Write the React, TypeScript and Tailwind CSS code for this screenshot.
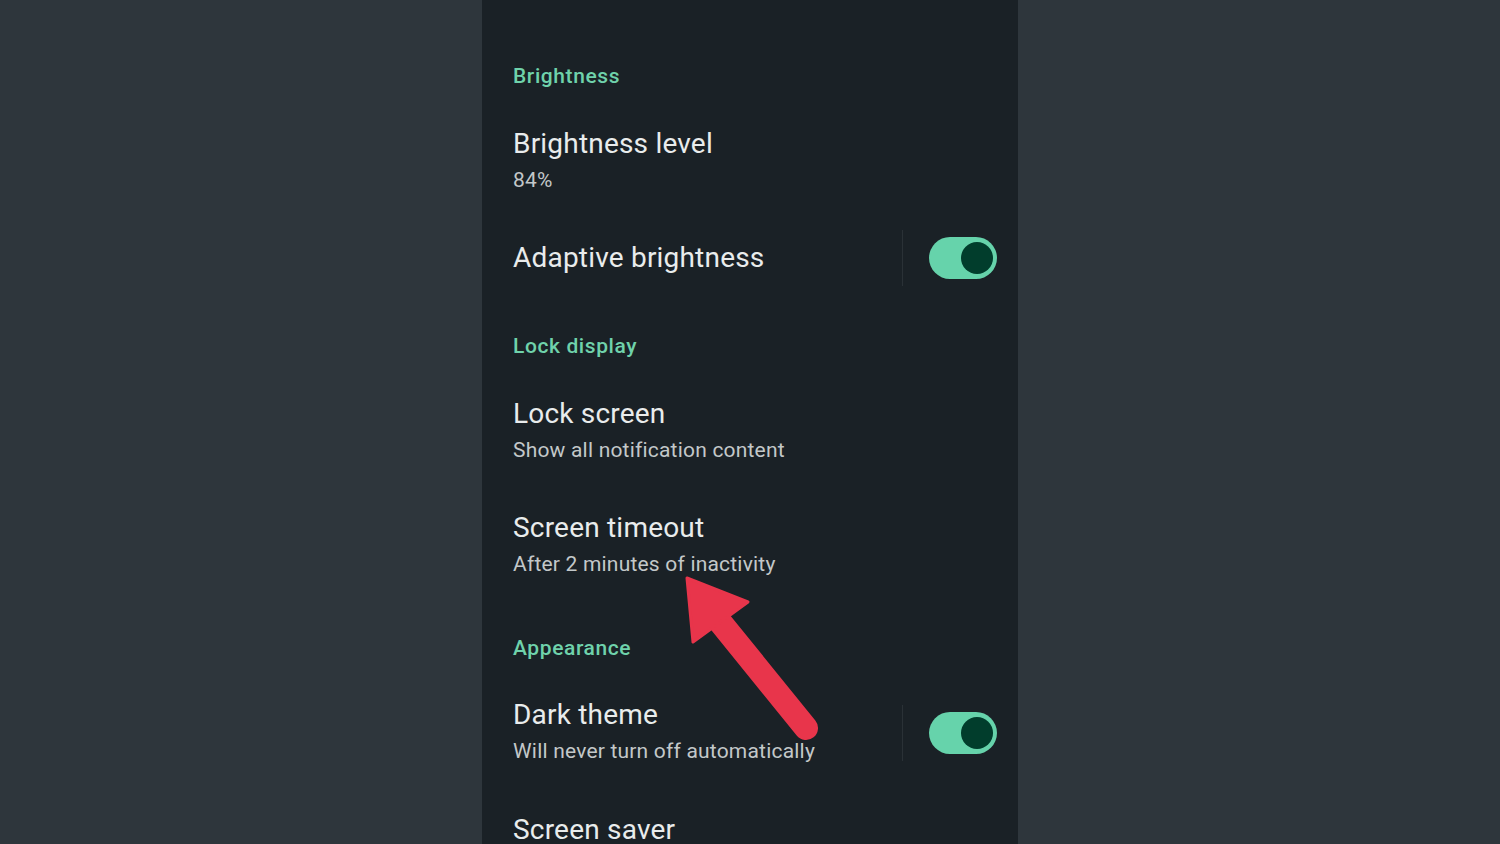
import React from "react";

type Row =
  | { kind: "header"; text: string; h: number }
  | { kind: "item"; title: string; sub?: string; toggle?: boolean; h: number };

const rows: Row[] = [
  { kind: "header", text: "Brightness", h: 86 },
  { kind: "item", title: "Brightness level", sub: "84%", h: 86 },
  { kind: "item", title: "Adaptive brightness", toggle: true, h: 106 },
  { kind: "header", text: "Lock display", h: 70 },
  { kind: "item", title: "Lock screen", sub: "Show all notification content", h: 102 },
  { kind: "item", title: "Screen timeout", sub: "After 2 minutes of inactivity", h: 126 },
  { kind: "header", text: "Appearance", h: 78 },
  { kind: "item", title: "Dark theme", sub: "Will never turn off automatically", toggle: true, h: 92 },
  { kind: "item", title: "Screen saver", h: 102 },
];

function Toggle() {
  return (
    <div className="flex items-center h-full">
      <div className="w-px h-[56px] bg-[#2a3136]" />
      <div className="ml-[26px] w-[68px] h-[42px] rounded-full bg-[#66d3ab] flex items-center justify-end pr-[4px]">
        <div className="w-[32px] h-[32px] rounded-full bg-[#013d2c]" />
      </div>
    </div>
  );
}

export default function App() {
  return (
    <div className="w-[1500px] h-[844px] bg-[#2e363c] flex justify-center overflow-hidden font-['Roboto',sans-serif]">
      <div className="relative w-[536px] h-[844px] bg-[#1a2126] pt-[33px] overflow-hidden">
        {rows.map((r, i) =>
          r.kind === "header" ? (
            <div key={i} style={{ height: r.h }} className="flex items-center pl-[31px]">
              <span className="text-[21px] leading-[28px] font-medium text-[#6fd2ab] tracking-[0.6px]">{r.text}</span>
            </div>
          ) : (
            <div key={i} style={{ height: r.h }} className="flex items-center pl-[31px] pr-[21px]">
              <div className="flex-1 flex flex-col">
                <span className="text-[28px] leading-[36px] text-[#e9ecec] tracking-[0.2px]">{r.title}</span>
                {r.sub && (
                  <span className="text-[21px] leading-[36px] text-[#c3c8c9] tracking-[0.2px]">{r.sub}</span>
                )}
              </div>
              {r.toggle && <Toggle />}
            </div>
          )
        )}
        <svg className="absolute left-0 top-0 pointer-events-none" width="536" height="844" viewBox="482 0 536 844">
          <line x1="712" y1="612" x2="806" y2="728" stroke="#e8354b" strokeWidth="24" strokeLinecap="round" />
          <polygon points="687,578 748,602 693,642" fill="#e8354b" strokeLinejoin="round" stroke="#e8354b" strokeWidth="3" />
        </svg>
      </div>
    </div>
  );
}
